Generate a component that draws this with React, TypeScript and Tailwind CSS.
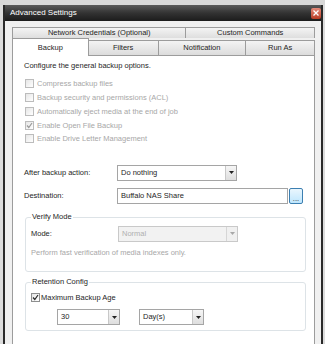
import type { ReactNode } from 'react'

function Check({ checked, disabled }: { checked?: boolean; disabled?: boolean }) {
  return (
    <span
      className={`flex h-[9px] w-[9px] shrink-0 items-center justify-center border bg-gradient-to-br from-[#e6e6e6] to-white ${
        disabled ? 'border-[#bcbcbc]' : 'border-[#8e8f8f]'
      }`}
    >
      {checked && (
        <svg width="7" height="7" viewBox="0 0 7 7">
          <path d="M1 3.5 L2.8 5.5 L6 1" fill="none" stroke={disabled ? '#9a9a9a' : '#2a2a2a'} strokeWidth="1.2" />
        </svg>
      )}
    </span>
  )
}

function CheckRow({ label, checked, disabled }: { label: string; checked?: boolean; disabled?: boolean }) {
  return (
    <div className="flex h-[13.75px] items-center gap-[3px] pl-[1px]">
      <Check checked={checked} disabled={disabled} />
      <span className={disabled ? 'text-[#a7a7a7]' : 'text-[#1e1e1e]'}>{label}</span>
    </div>
  )
}

function Select({ value, width, disabled }: { value: string; width: string; disabled?: boolean }) {
  return (
    <div
      className={`flex h-[16px] ${width} items-stretch border ${
        disabled ? 'border-[#c9c9c9] bg-[#f2f2f2]' : 'border-[#a5a5a5] bg-white'
      }`}
    >
      <span className={`flex-1 pl-[3px] leading-[14px] ${disabled ? 'text-[#b0b0b0]' : 'text-[#1e1e1e]'}`}>{value}</span>
      <span
        className={`flex w-[11px] items-center justify-center border-l ${
          disabled ? 'border-[#d6d6d6] bg-[#f0f0f0]' : 'border-[#c8c8c8] bg-gradient-to-b from-[#f6f6f6] to-[#dedede]'
        }`}
      >
        <svg width="5" height="3" viewBox="0 0 5 3">
          <path d="M0 0 H5 L2.5 3 Z" fill={disabled ? '#a8a8a8' : '#222'} />
        </svg>
      </span>
    </div>
  )
}

function Group({ title, children, className }: { title: string; children: ReactNode; className: string }) {
  return (
    <div className={`relative ml-[1px] w-[281px] rounded-[3px] border border-[#dde3e7] ${className}`}>
      <span className="absolute left-[5px] top-[-6px] bg-white px-[1px] leading-[10px] text-[#1e1e1e]">{title}</span>
      {children}
    </div>
  )
}

function Tab({ label, width, active }: { label: string; width: string; active?: boolean }) {
  return (
    <div
      className={`flex items-center justify-center border border-[#9c9c9c] ${width} ${
        active
          ? 'relative z-10 -mt-[2px] h-[18px] border-b-0 bg-white'
          : 'h-[16px] -ml-[1px] bg-gradient-to-b from-[#f4f4f4] to-[#dcdcdc]'
      }`}
    >
      {label}
    </div>
  )
}

export default function App() {
  return (
    <div
      className="h-[344px] w-[325px] overflow-hidden bg-[#dcdcdc] text-[7.5px] text-[#1e1e1e]"
      style={{ fontFamily: '"Liberation Sans", Arial, sans-serif' }}
    >
      <div className="h-[5px] bg-[#d8d8d8]" />
      <div className="ml-[3px] mr-[2px] flex h-[339px] flex-col border-x-2 border-[#2a2a2a]">
        {/* title bar */}
        <div className="flex h-[16px] items-center justify-between bg-gradient-to-b from-[#5a5a5a] via-[#333] to-[#1c1c1c] pl-[5px] pr-0">
          <span className="text-[8px] text-white">Advanced Settings</span>
          <span className="flex h-[11px] w-[10px] items-center justify-center rounded-[2px] bg-gradient-to-b from-[#e58a7a] to-[#b83a22]">
            <svg width="6" height="6" viewBox="0 0 6 6">
              <path d="M0.5 0.5 L5.5 5.5 M5.5 0.5 L0.5 5.5" stroke="#fff" strokeWidth="1.3" />
            </svg>
          </span>
        </div>

        {/* body */}
        <div className="flex flex-1 flex-col bg-[#f0f0f0] pl-[7px] pr-[6px] pt-[6px]">
          <div className="flex h-[11px]">
            <div className="flex w-[175px] items-center justify-center border border-b-0 border-[#9c9c9c] bg-gradient-to-b from-[#f4f4f4] to-[#dedede]">
              Network Credentials (Optional)
            </div>
            <div className="-ml-[1px] flex w-[130px] items-center justify-center border border-b-0 border-[#9c9c9c] bg-gradient-to-b from-[#f4f4f4] to-[#dedede]">
              Custom Commands
            </div>
          </div>
          <div className="flex items-end pt-[2px]">
            <Tab label="Backup" width="w-[77px]" active />
            <Tab label="Filters" width="w-[71px]" />
            <Tab label="Notification" width="w-[89px]" />
            <Tab label="Run As" width="w-[70px]" />
          </div>

          {/* panel */}
          <div className="-mt-[1px] flex flex-1 flex-col border-x border-t border-[#9c9c9c] bg-white pl-[11px] pt-[4px]">
            <div className="flex h-[12px] items-center">Configure the general backup options.</div>
            <div className="mt-[5px] flex flex-col">
              <CheckRow label="Compress backup files" disabled />
              <CheckRow label="Backup security and permissions (ACL)" disabled />
              <CheckRow label="Automatically eject media at the end of job" disabled />
              <CheckRow label="Enable Open File Backup" checked disabled />
              <CheckRow label="Enable Drive Letter Management" disabled />
            </div>

            <div className="mt-[19px] flex items-center">
              <span className="w-[93px]">After backup action:</span>
              <Select value="Do nothing" width="w-[120px]" />
            </div>

            <div className="mt-[7px] flex items-center">
              <span className="w-[93px]">Destination:</span>
              <div className="h-[16px] w-[171px] border border-[#a5a5a5] bg-white pl-[3px] leading-[14px]">Buffalo NAS Share</div>
              <div className="ml-[1px] flex h-[16px] w-[14px] items-end justify-center rounded-[2px] border border-[#3c7fb1] bg-gradient-to-b from-[#eaf6fd] to-[#bee6fd] leading-[9px]">
                ...
              </div>
            </div>

            <Group title="Verify Mode" className="mt-[13px] h-[55px]">
              <div className="mt-[8px] flex items-center pl-[5px]">
                <span className="w-[87px]">Mode:</span>
                <Select value="Normal" width="w-[120px]" disabled />
              </div>
              <div className="mt-[5px] pl-[5px] text-[#a7a7a7]">Perform fast verification of media indexes only.</div>
            </Group>

            <Group title="Retention Config" className="mt-[10px] h-[49px]">
              <div className="mt-[9px] flex items-center gap-[1px] pl-[5px]">
                <Check checked />
                <span>Maximum Backup Age</span>
              </div>
              <div className="mt-[6px] flex items-center pl-[31px]">
                <Select value="30" width="w-[63px]" />
                <div className="ml-[19px]">
                  <Select value="Day(s)" width="w-[65px]" />
                </div>
              </div>
            </Group>
          </div>
        </div>
      </div>
    </div>
  )
}
